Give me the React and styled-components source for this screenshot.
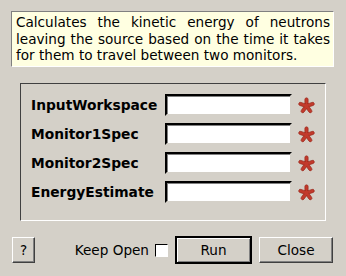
import { Fragment } from 'react'
import styled, { createGlobalStyle } from 'styled-components'

const GlobalStyle = createGlobalStyle`
  html, body {
    margin: 0;
    padding: 0;
    background: #d4d0c8;
  }
  body {
    font-family: "DejaVu Sans", Verdana, sans-serif;
    font-size: 13.6px;
    color: #000;
  }
`

const Dialog = styled.div`
  width: 346px;
  height: 276px;
  box-sizing: border-box;
  background: #d4d0c8;
  display: flex;
  flex-direction: column;
`

const Description = styled.div`
  margin: 11px 12px 0 11px;
  height: 56px;
  box-sizing: border-box;
  padding: 2px 3px 0 4px;
  background: #ffffe1;
  border: 1px solid;
  border-color: #808080 #ffffff #ffffff #808080;
  text-align: justify;
  line-height: 16.5px;
  font-size: 13.6px;
`

const Group = styled.div`
  margin: 16px 0 0 20px;
  width: 306px;
  height: 138px;
  box-sizing: border-box;
  border: 1px solid;
  border-color: #404040 #ffffff #ffffff #404040;
  padding: 10px 0 0 10px;
  display: grid;
  grid-template-columns: 134px 127px 25px;
  grid-auto-rows: 22px;
  row-gap: 7px;
  align-items: center;
`

const Label = styled.label`
  font-weight: bold;
  font-size: 13.8px;
  white-space: nowrap;
`

const Field = styled.input`
  width: 127px;
  height: 22px;
  box-sizing: border-box;
  margin: 0;
  padding: 0 3px;
  background: #fff;
  border: 2px solid;
  border-color: #000 #d4d0c8 #d4d0c8 #000;
  box-shadow: inset 1px 1px 0 #808080;
  outline: none;
  font: inherit;
`

const StarWrap = styled.span`
  display: flex;
  justify-content: flex-end;
  align-items: center;
  padding-right: 2px;
`

const Footer = styled.div`
  margin: 15px 13px 0 12px;
  display: flex;
  align-items: center;
  height: 28px;
`

const Button = styled.button`
  height: ${p => (p.$default ? 28 : 26)}px;
  width: ${p => p.$w}px;
  box-sizing: border-box;
  margin: 0;
  padding: 0;
  background: #d4d0c8;
  font-family: "DejaVu Sans", Verdana, sans-serif;
  font-size: 13.6px;
  color: #000;
  border: 1px solid;
  border-color: #ffffff #404040 #404040 #ffffff;
  box-shadow: inset -1px -1px 0 #808080;
  ${p => p.$default && `
    border-width: 2px;
    border-color: #000;
    box-shadow: inset 1px 1px 0 #fff, inset -1px -1px 0 #808080;
  `}
`

const Spacer = styled.div`
  flex: 1;
`

const KeepOpen = styled.label`
  display: flex;
  align-items: center;
  gap: 6px;
  margin-right: 7px;
`

const Check = styled.span`
  width: 13px;
  height: 13px;
  box-sizing: border-box;
  background: #fff;
  border: 1px solid;
  border-color: #000 #fff #fff #000;
  box-shadow: 1px 1px 0 #d4d0c8;
`

const ButtonGap = styled.div`
  width: 7px;
`

function Star() {
  return (
    <svg width="17" height="17" viewBox="0 0 20 20">
      <g stroke="#9a2a1e" strokeWidth="0.8" fill="#c23a2c">
        {[0, 72, 144, 216, 288].map(a => (
          <rect key={a} x="8.1" y="1" width="3.8" height="9.5" rx="1.9" transform={`rotate(${a} 10 10.5)`} />
        ))}
      </g>
      <circle cx="10" cy="10.5" r="2.6" fill="#c23a2c" />
    </svg>
  )
}

const fields = ['InputWorkspace', 'Monitor1Spec', 'Monitor2Spec', 'EnergyEstimate']

export default function App() {
  return (
    <>
      <GlobalStyle />
      <Dialog>
        <Description>
          Calculates the kinetic energy of neutrons leaving the source based on the time it takes for them to travel between two monitors.
        </Description>
        <Group>
          {fields.map(f => (
            <Fragment key={f}>
              <Label>{f}</Label>
              <Field />
              <StarWrap><Star /></StarWrap>
            </Fragment>
          ))}
        </Group>
        <Footer>
          <Button $w={23}>?</Button>
          <Spacer />
          <KeepOpen>Keep Open <Check /></KeepOpen>
          <Button $w={77} $default>Run</Button>
          <ButtonGap />
          <Button $w={74}>Close</Button>
        </Footer>
      </Dialog>
    </>
  )
}
